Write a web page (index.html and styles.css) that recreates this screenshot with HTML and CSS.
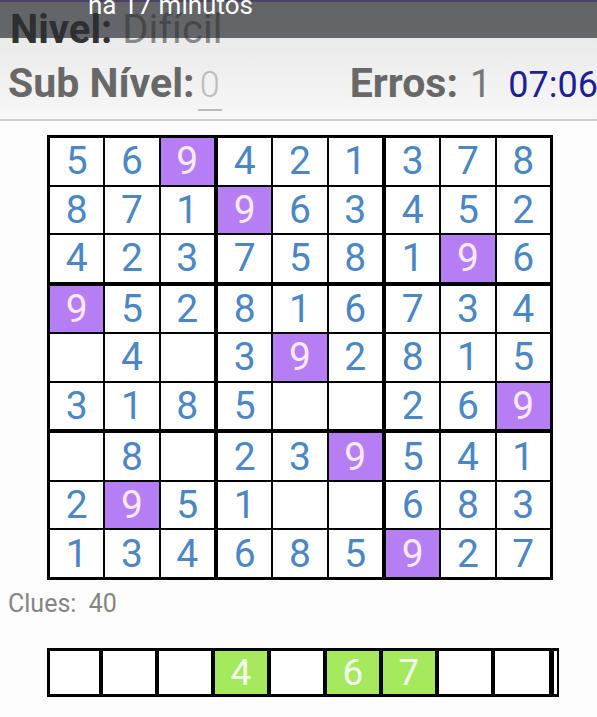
FILE: index.html
```html
<!DOCTYPE html>
<html lang="pt">
<head>
<meta charset="utf-8">
<title>Sudoku</title>
<link rel="stylesheet" href="styles.css">
</head>
<body>
<div class="header">
  <div class="level-row"><span class="lbl-dark">Nivel:</span> <span class="lbl-val">Difícil</span></div>
  <div class="status-row">
    <div class="sub"><span class="lbl">Sub Nível:</span><span class="edit">0</span></div>
    <div class="right">
      <span class="lbl">Erros:</span><span class="num">1</span><span class="time">07:06</span>
    </div>
  </div>
  <div class="notif"><span class="notif-text">há 17 minutos</span></div>
</div>

<div class="board">
  <div class="box">
    <div class="cell">5</div><div class="cell">6</div><div class="cell hl">9</div>
    <div class="cell">8</div><div class="cell">7</div><div class="cell">1</div>
    <div class="cell">4</div><div class="cell">2</div><div class="cell">3</div>
  </div>
  <div class="box">
    <div class="cell">4</div><div class="cell">2</div><div class="cell">1</div>
    <div class="cell hl">9</div><div class="cell">6</div><div class="cell">3</div>
    <div class="cell">7</div><div class="cell">5</div><div class="cell">8</div>
  </div>
  <div class="box">
    <div class="cell">3</div><div class="cell">7</div><div class="cell">8</div>
    <div class="cell">4</div><div class="cell">5</div><div class="cell">2</div>
    <div class="cell">1</div><div class="cell hl">9</div><div class="cell">6</div>
  </div>
  <div class="box">
    <div class="cell hl">9</div><div class="cell">5</div><div class="cell">2</div>
    <div class="cell"></div><div class="cell">4</div><div class="cell"></div>
    <div class="cell">3</div><div class="cell">1</div><div class="cell">8</div>
  </div>
  <div class="box">
    <div class="cell">8</div><div class="cell">1</div><div class="cell">6</div>
    <div class="cell">3</div><div class="cell hl">9</div><div class="cell">2</div>
    <div class="cell">5</div><div class="cell"></div><div class="cell"></div>
  </div>
  <div class="box">
    <div class="cell">7</div><div class="cell">3</div><div class="cell">4</div>
    <div class="cell">8</div><div class="cell">1</div><div class="cell">5</div>
    <div class="cell">2</div><div class="cell">6</div><div class="cell hl">9</div>
  </div>
  <div class="box">
    <div class="cell"></div><div class="cell">8</div><div class="cell"></div>
    <div class="cell">2</div><div class="cell hl">9</div><div class="cell">5</div>
    <div class="cell">1</div><div class="cell">3</div><div class="cell">4</div>
  </div>
  <div class="box">
    <div class="cell">2</div><div class="cell">3</div><div class="cell hl">9</div>
    <div class="cell">1</div><div class="cell"></div><div class="cell"></div>
    <div class="cell">6</div><div class="cell">8</div><div class="cell">5</div>
  </div>
  <div class="box">
    <div class="cell">5</div><div class="cell">4</div><div class="cell">1</div>
    <div class="cell">6</div><div class="cell">8</div><div class="cell">3</div>
    <div class="cell hl">9</div><div class="cell">2</div><div class="cell">7</div>
  </div>
</div>

<div class="clues">Clues:&nbsp; 40</div>

<div class="picker">
  <div class="pcell"></div>
  <div class="pcell"></div>
  <div class="pcell"></div>
  <div class="pcell on">4</div>
  <div class="pcell"></div>
  <div class="pcell on">6</div>
  <div class="pcell on">7</div>
  <div class="pcell"></div>
  <div class="pcell last"></div>
</div>
</body>
</html>
```
FILE: styles.css
```css
* { box-sizing: border-box; }
html, body { margin: 0; padding: 0; }
body {
  width: 597px;
  height: 717px;
  overflow: hidden;
  background: #fdfdfd;
  font-family: Roboto, "Noto Sans", sans-serif;
}
.header {
  position: relative;
  height: 121px;
  background: linear-gradient(#e4e4e4, #f7f7f7);
  border-bottom: 2px solid #cfcfcf;
  overflow: hidden;
}
.level-row {
  padding: 8px 0 0 10px;
  height: 60px;
  font-size: 40px;
  line-height: 44px;
  white-space: nowrap;
}
.lbl-dark { font-weight: 700; color: #333; }
.lbl-val { color: #888; }
.status-row {
  display: flex;
  justify-content: space-between;
  align-items: baseline;
  padding-left: 8px;
  font-size: 41px;
  line-height: 46px;
  white-space: nowrap;
}
.lbl { font-weight: 700; color: #686868; }
.edit {
  color: #bbb;
  font-size: 36px;
  font-weight: 300;
  margin-left: 3px;
  padding: 0 2px;
  border-bottom: 2px solid #bbb;
  display: inline-block;
  line-height: 48px;
}
.right { display: flex; align-items: baseline; }
.num { color: #777; margin-left: 12px; font-size: 38px; }
.time { color: #1c1f96; margin-left: 17px; font-size: 36px; margin-right: -1px; }
.notif {
  position: absolute;
  left: 0; top: 0; right: 0;
  height: 38px;
  background: rgba(43, 46, 50, 0.7);
  border-top: 2px solid #4a4262;
}
.notif-text {
  position: absolute;
  left: 88px;
  top: -11px;
  color: #fff;
  font-size: 26px;
  line-height: 28px;
  white-space: nowrap;
}

.board {
  margin: 14px 0 0 47px;
  width: 506px;
  height: 445px;
  background: #000;
  padding: 3px;
  display: grid;
  grid-template-columns: repeat(3, 1fr);
  grid-template-rows: repeat(3, 1fr);
  gap: 4px;
}
.box {
  display: grid;
  grid-template-columns: repeat(3, 1fr);
  grid-template-rows: repeat(3, 1fr);
  gap: 2px;
}
.cell {
  background: #fff;
  color: #4a87c4;
  font-size: 39px;
  display: flex;
  align-items: center;
  justify-content: center;
}
.cell.hl { background: #b57ff3; color: #fbe9f8; }

.clues {
  margin: 10px 0 0 8px;
  font-size: 25px;
  line-height: 28px;
  color: #858585;
}

.picker {
  margin: 30px 0 0 47px;
  display: flex;
  height: 49px;
  width: 512px;
  border: 3px solid #000;
  border-right: 2px solid #000;
}
.pcell {
  flex: 0 0 56px;
  height: 100%;
  background: #fff;
  border-right: 4px solid #000;
  color: #f4fff0;
  font-size: 37px;
  display: flex;
  align-items: center;
  justify-content: center;
}
.pcell:first-child { flex-basis: 53px; }
.pcell.on { background: #a4ea5c; }
.pcell.last { flex-basis: 59px; border-right: 5px solid #000; margin-right: 2px; }
```
